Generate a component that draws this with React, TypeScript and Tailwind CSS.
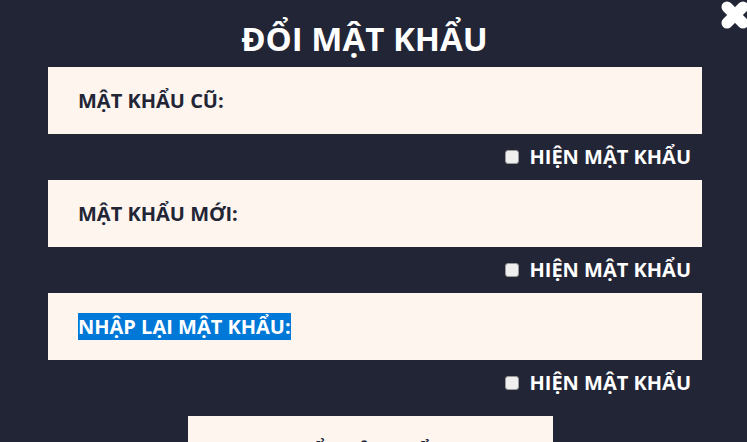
import React from "react";

function Field({ label, selected }: { label: string; selected?: boolean }) {
  return (
    <div className="h-[67px] bg-[#fdf5ee] flex items-center pl-[30px]">
      <span
        className={
          "text-[20px] font-bold leading-[27px] " +
          (selected ? "bg-[#0078d7] text-white" : "text-[#222536]")
        }
      >
        {label}
      </span>
    </div>
  );
}

function ShowRow({ tall }: { tall?: boolean }) {
  return (
    <div className={(tall ? "h-[56px] pb-[10px]" : "h-[46px]") + " flex items-center justify-end pr-[11px]"}>
      <span className="w-[14px] h-[14px] rounded-[3px] bg-[#efefef] border border-[#9a9a9a] mr-[10px]" />
      <span className="text-[20px] font-bold text-white leading-[26px]">HIỆN MẬT KHẨU</span>
    </div>
  );
}

export default function App() {
  return (
    <div className="relative w-[747px] h-[442px] overflow-hidden bg-[#222536] font-['Open_Sans',sans-serif]">
      <svg className="absolute left-[718px] top-0 w-[34px] h-[30px]" viewBox="0 0 34 30">
        <g stroke="#ffffff" strokeWidth="11" strokeLinecap="round">
          <line x1="9" y1="7" x2="25" y2="23" />
          <line x1="25" y1="7" x2="9" y2="23" />
        </g>
      </svg>
      <h1 className="h-[67px] flex items-center justify-center pr-[18px] pt-[10px] text-[33px] font-bold text-white">
        ĐỔI MẬT KHẨU
      </h1>
      <div className="ml-[48px] w-[654px]">
        <Field label="MẬT KHẨU CŨ:" />
        <ShowRow />
        <Field label="MẬT KHẨU MỚI:" />
        <ShowRow />
        <Field label="NHẬP LẠI MẬT KHẨU:" selected />
        <ShowRow tall />
      </div>
      <div className="ml-[188px] w-[365px] h-[60px] bg-[#fdf5ee] flex justify-center pt-[22px]">
        <span className="text-[20px] font-bold text-[#222536] leading-[28px]">ĐỔI MẬT KHẨU</span>
      </div>
    </div>
  );
}
